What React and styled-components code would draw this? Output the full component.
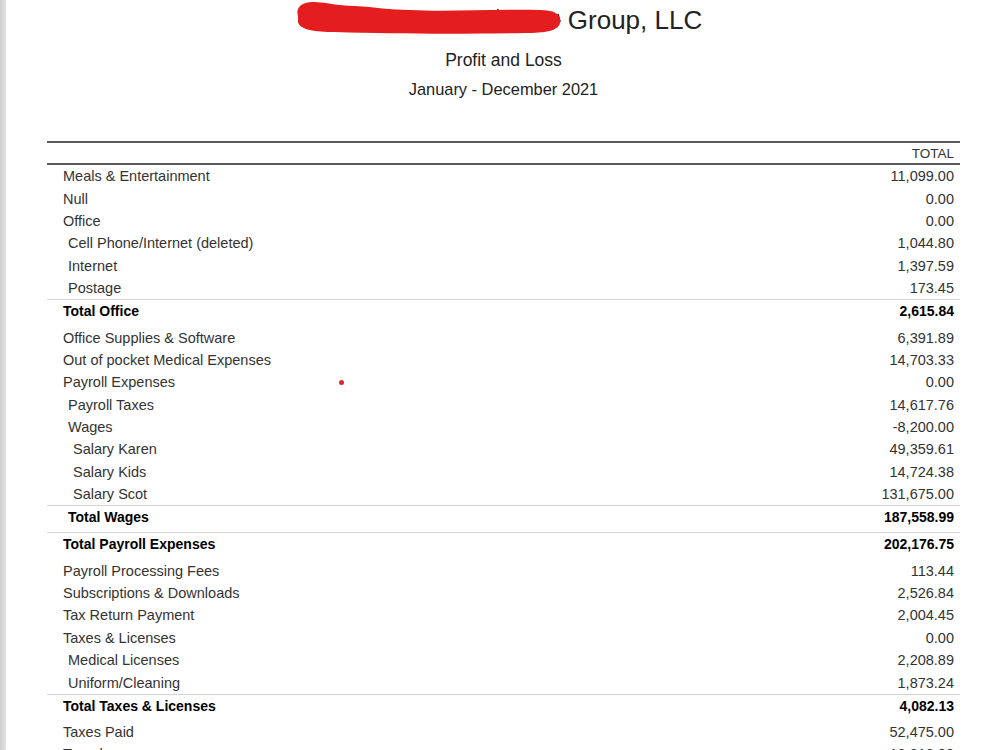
import React from 'react'
import styled, { createGlobalStyle } from 'styled-components'

const GlobalStyle = createGlobalStyle`
  html, body {
    margin: 0;
    padding: 0;
    background: #ffffff;
    overflow: hidden;
  }
  body {
    font-family: "Liberation Sans", Arial, Helvetica, sans-serif;
    color: #333;
  }
`

const rows = [
  { label: 'Meals & Entertainment', value: '11,099.00', level: 0 },
  { label: 'Null', value: '0.00', level: 0 },
  { label: 'Office', value: '0.00', level: 0 },
  { label: 'Cell Phone/Internet (deleted)', value: '1,044.80', level: 1 },
  { label: 'Internet', value: '1,397.59', level: 1 },
  { label: 'Postage', value: '173.45', level: 1 },
  { label: 'Total Office', value: '2,615.84', level: 0, total: true },
  { label: 'Office Supplies & Software', value: '6,391.89', level: 0 },
  { label: 'Out of pocket Medical Expenses', value: '14,703.33', level: 0 },
  { label: 'Payroll Expenses', value: '0.00', level: 0, mark: true },
  { label: 'Payroll Taxes', value: '14,617.76', level: 1 },
  { label: 'Wages', value: '-8,200.00', level: 1 },
  { label: 'Salary Karen', value: '49,359.61', level: 2 },
  { label: 'Salary Kids', value: '14,724.38', level: 2 },
  { label: 'Salary Scot', value: '131,675.00', level: 2 },
  { label: 'Total Wages', value: '187,558.99', level: 1, total: true },
  { label: 'Total Payroll Expenses', value: '202,176.75', level: 0, total: true },
  { label: 'Payroll Processing Fees', value: '113.44', level: 0 },
  { label: 'Subscriptions & Downloads', value: '2,526.84', level: 0 },
  { label: 'Tax Return Payment', value: '2,004.45', level: 0 },
  { label: 'Taxes & Licenses', value: '0.00', level: 0 },
  { label: 'Medical Licenses', value: '2,208.89', level: 1 },
  { label: 'Uniform/Cleaning', value: '1,873.24', level: 1 },
  { label: 'Total Taxes & Licenses', value: '4,082.13', level: 0, total: true },
  { label: 'Taxes Paid', value: '52,475.00', level: 0 },
  { label: 'Travel', value: '10,318.00', level: 0 },
]

// redaction scribble over the company name
const RedactMark = () => (
  <svg width="267" height="40" viewBox="0 0 267 40">
    <path d="M203 9 L203 15" stroke="#222" strokeWidth="1.5" />
    <path d="M263 14 L265 22" stroke="#222" strokeWidth="1.5" />
    <path
      d="M3 16 C0 7, 8 1, 20 2 C35 3, 45 6, 60 6 C80 7, 95 10, 115 10
         C150 12, 200 9, 245 10 C260 10, 267 15, 265 23 C263 31, 250 33, 230 33
         C170 34, 100 34, 40 32 C20 32, 5 30, 3 22 Z"
      fill="#e41d1f"
    />
  </svg>
)

const App = () => {
  return (
    <>
      <GlobalStyle />
      <Shell>
        <Gutter />
        <Page>
          <Header>
            <CompanyLine>
              <RedactMark />
              <CompanyName>Group, LLC</CompanyName>
            </CompanyLine>
            <ReportTitle>Profit and Loss</ReportTitle>
            <Period>January - December 2021</Period>
          </Header>
          <Table>
            <HeadRow>
              <HeadCell>TOTAL</HeadCell>
            </HeadRow>
            {rows.map((r) => (
              <Row key={r.label} $level={r.level} $total={r.total}>
                <Label>{r.label}</Label>
                <Amount>{r.value}</Amount>
                {r.mark && <Dot />}
              </Row>
            ))}
          </Table>
        </Page>
      </Shell>
    </>
  )
}

const Shell = styled.div`
  display: flex;
  height: 750px;
  overflow: hidden;
`

const Gutter = styled.div`
  width: 6px;
  flex: none;
  background: linear-gradient(to right, #cdcdcd, #e4e4e4);
`

const Page = styled.div`
  flex: 1;
  padding: 0 40px 0 41px;
`

const Header = styled.div`
  display: flex;
  flex-direction: column;
  align-items: center;
`

const CompanyLine = styled.div`
  height: 40px;
  display: flex;
  align-items: center;
  gap: 6px;
  padding-right: 10px;
`

const CompanyName = styled.span`
  font-size: 26px;
  color: #222;
`

const ReportTitle = styled.div`
  margin-top: 8px;
  line-height: 24px;
  font-size: 17.5px;
  color: #222;
`

const Period = styled.div`
  margin-top: 7px;
  line-height: 20px;
  font-size: 16.4px;
  color: #222;
`

const Table = styled.div`
  margin-top: 42px;
`

const HeadRow = styled.div`
  display: flex;
  justify-content: flex-end;
  align-items: center;
  height: 20px;
  padding-right: 6px;
  border-top: 2px solid #5a5a5a;
  border-bottom: 2px solid #5a5a5a;
`

const HeadCell = styled.span`
  font-size: 13.5px;
  color: #333;
`

const Row = styled.div`
  position: relative;
  display: flex;
  justify-content: space-between;
  align-items: center;
  height: ${(p) => (p.$total ? '22px' : '22.4px')};
  padding-left: ${(p) => 16 + p.$level * 5}px;
  padding-right: 6px;
  font-size: ${(p) => (p.$total ? '14px' : '14.5px')};
  color: ${(p) => (p.$total ? '#000' : '#333')};
  font-weight: ${(p) => (p.$total ? 700 : 400)};
  border-top: ${(p) => (p.$total ? '1.5px solid #d2d2d2' : 'none')};
  margin-bottom: ${(p) => (p.$total ? '4px' : '0')};
`

const Label = styled.span`
  white-space: nowrap;
`

const Amount = styled.span`
  white-space: nowrap;
`

const Dot = styled.span`
  position: absolute;
  left: 292px;
  top: 50%;
  width: 5px;
  height: 5px;
  margin-top: -2px;
  border-radius: 50%;
  background: #e0262a;
`

export default App
